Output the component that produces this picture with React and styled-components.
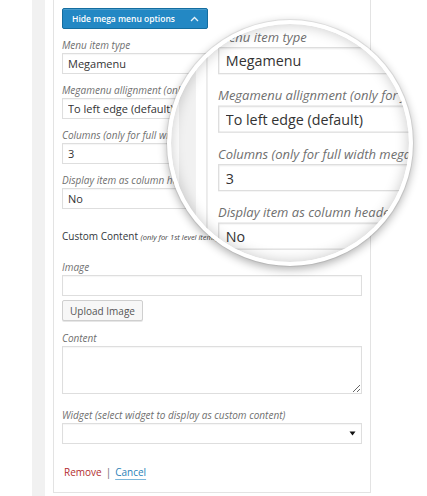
import React from "react";
import styled, { createGlobalStyle } from "styled-components";

const Global = createGlobalStyle`
  html, body { margin: 0; padding: 0; background: #fff; }
  * { box-sizing: border-box; }
`;

const Page = styled.div`
  position: relative;
  width: 427px;
  height: 496px;
  overflow: hidden;
  background: #fff;
  font-family: "Open Sans", "Liberation Sans", sans-serif;
`;

const Sheet = styled.div`
  display: flex;
  align-items: flex-start;
  width: 427px;
  height: 496px;
  background: #fff;
`;

const Gutter = styled.div`
  width: 13px;
  height: 100%;
  margin-left: 32px;
  background: #f1f1f1;
`;

const Panel = styled.div`
  width: 318px;
  height: 493px;
  margin-left: 8px;
  padding: 8px 8px 0 8px;
  border: 1px solid #e3e3e3;
  border-top: none;
  background: #fff;
  display: flex;
  flex-direction: column;
`;

const ToggleButton = styled.button`
  display: flex;
  align-items: center;
  justify-content: space-between;
  width: 146px;
  height: 21px;
  padding: 0 8px 0 9px;
  border: 1px solid #146d9f;
  border-radius: 2px;
  background: #2388c4;
  box-shadow: inset 0 1px 0 rgba(255, 255, 255, 0.18);
  color: #fff;
  font-family: inherit;
  font-size: 8.5px;
  font-weight: 600;
  cursor: pointer;
`;

const Field = styled.div`
  display: flex;
  flex-direction: column;
  margin-top: ${(p) => p.$mt ?? 9}px;
`;

const Label = styled.label`
  display: block;
  height: 14px;
  line-height: 14px;
  margin-bottom: 1px;
  font-size: 10px;
  font-style: italic;
  color: #6f6f6f;
  white-space: nowrap;
`;

const Input = styled.input`
  display: block;
  width: 300px;
  height: 21px;
  margin: 0;
  padding: 0 5px;
  border: 1px solid #dedede;
  border-radius: 0;
  background: #fff;
  box-shadow: inset 0 1px 1px rgba(0, 0, 0, 0.04);
  font-family: inherit;
  font-size: 11px;
  color: #333;
  outline: none;
`;

const TextArea = styled.textarea`
  display: block;
  width: 300px;
  height: 48px;
  margin: 0;
  padding: 3px 5px;
  border: 1px solid #dedede;
  border-radius: 0;
  background: #fff;
  box-shadow: inset 0 1px 1px rgba(0, 0, 0, 0.04);
  font-family: inherit;
  font-size: 11px;
  color: #333;
  resize: vertical;
  outline: none;
`;

const Select = styled.div`
  display: flex;
  align-items: center;
  justify-content: flex-end;
  width: 300px;
  height: 21px;
  padding: 0 5px;
  border: 1px solid #dedede;
  background: #fff;
  box-shadow: inset 0 1px 1px rgba(0, 0, 0, 0.04);
`;

const Heading = styled.div`
  height: 14px;
  line-height: 14px;
  margin-top: ${(p) => p.$mt}px;
  font-size: 10px;
  color: #32373c;
  white-space: nowrap;
`;

const Note = styled.span`
  font-size: 7.5px;
  font-style: italic;
  color: #444;
`;

const SecondaryButton = styled.button`
  align-self: flex-start;
  width: 81px;
  height: 21px;
  margin-top: 4px;
  padding: 0;
  border: 1px solid #cfcfcf;
  border-radius: 2px;
  background: #f7f7f7;
  box-shadow: 0 1px 0 #e6e6e6;
  font-family: inherit;
  font-size: 10px;
  color: #555;
`;

const Actions = styled.div`
  display: flex;
  align-items: center;
  gap: 4px;
  height: 16px;
  margin-top: 20px;
  padding-left: 2px;
  font-size: 10px;
`;

const ActionLink = styled.a`
  color: ${(p) => (p.$danger ? "#b32d2e" : "#2a82b8")};
  text-decoration: ${(p) => (p.$danger ? "none" : "underline")};
  text-decoration-color: #7db7da;
  text-underline-offset: 3px;
  cursor: pointer;
`;

const Divider = styled.span`
  color: #666;
`;

const Lens = styled.div`
  position: absolute;
  left: 167px;
  top: 20px;
  width: 246px;
  height: 246px;
  border: 4px solid #fff;
  border-radius: 50%;
  overflow: hidden;
  background: #fff;
  box-shadow: 0 0 0 1px rgba(0, 0, 0, 0.07), 0 3px 10px rgba(0, 0, 0, 0.32);

  &::after {
    content: "";
    position: absolute;
    inset: 0;
    border-radius: 50%;
    box-shadow: inset 0 0 14px rgba(0, 0, 0, 0.22);
    pointer-events: none;
  }
`;

const Zoomed = styled.div`
  position: absolute;
  left: 0;
  top: 0;
  transform-origin: 0 0;
  transform: translate(-33.6px, -45.9px) scale(1.3);
`;

function ChevronUp() {
  return (
    <svg width="9" height="6" viewBox="0 0 9 6" aria-hidden="true">
      <path d="M1 5 L4.5 1.5 L8 5" fill="none" stroke="#e8f2f9" strokeWidth="1.3" />
    </svg>
  );
}

function Caret() {
  return (
    <svg width="7" height="5" viewBox="0 0 7 5" aria-hidden="true">
      <path d="M0.5 0.5 H6.5 L3.5 4.5 Z" fill="#111" />
    </svg>
  );
}

function MenuItemForm() {
  return (
    <Sheet>
      <Gutter />
      <Panel>
        <ToggleButton type="button">
          <span>Hide mega menu options</span>
          <ChevronUp />
        </ToggleButton>

        <Field $mt={9}>
          <Label>Menu item type</Label>
          <Input readOnly value="Megamenu" />
        </Field>
        <Field>
          <Label>Megamenu allignment (only for full width megamenu)</Label>
          <Input readOnly value="To left edge (default)" />
        </Field>
        <Field>
          <Label>Columns (only for full width megamenu)</Label>
          <Input readOnly value="3" />
        </Field>
        <Field>
          <Label>Display item as column header</Label>
          <Input readOnly value="No" />
        </Field>

        <Heading $mt={20}>
          Custom Content <Note>(only for 1st level items)</Note>
        </Heading>

        <Field $mt={17}>
          <Label>Image</Label>
          <Input readOnly value="" />
        </Field>
        <SecondaryButton type="button">Upload Image</SecondaryButton>

        <Field $mt={10}>
          <Label>Content</Label>
          <TextArea readOnly value="" />
        </Field>

        <Field $mt={14}>
          <Label>Widget (select widget to display as custom content)</Label>
          <Select>
            <Caret />
          </Select>
        </Field>

        <Actions>
          <ActionLink $danger>Remove</ActionLink>
          <Divider>|</Divider>
          <ActionLink>Cancel</ActionLink>
        </Actions>
      </Panel>
    </Sheet>
  );
}

export default function App() {
  return (
    <>
      <Global />
      <Page>
        <MenuItemForm />
        <Lens>
          <Zoomed>
            <MenuItemForm />
          </Zoomed>
        </Lens>
      </Page>
    </>
  );
}
